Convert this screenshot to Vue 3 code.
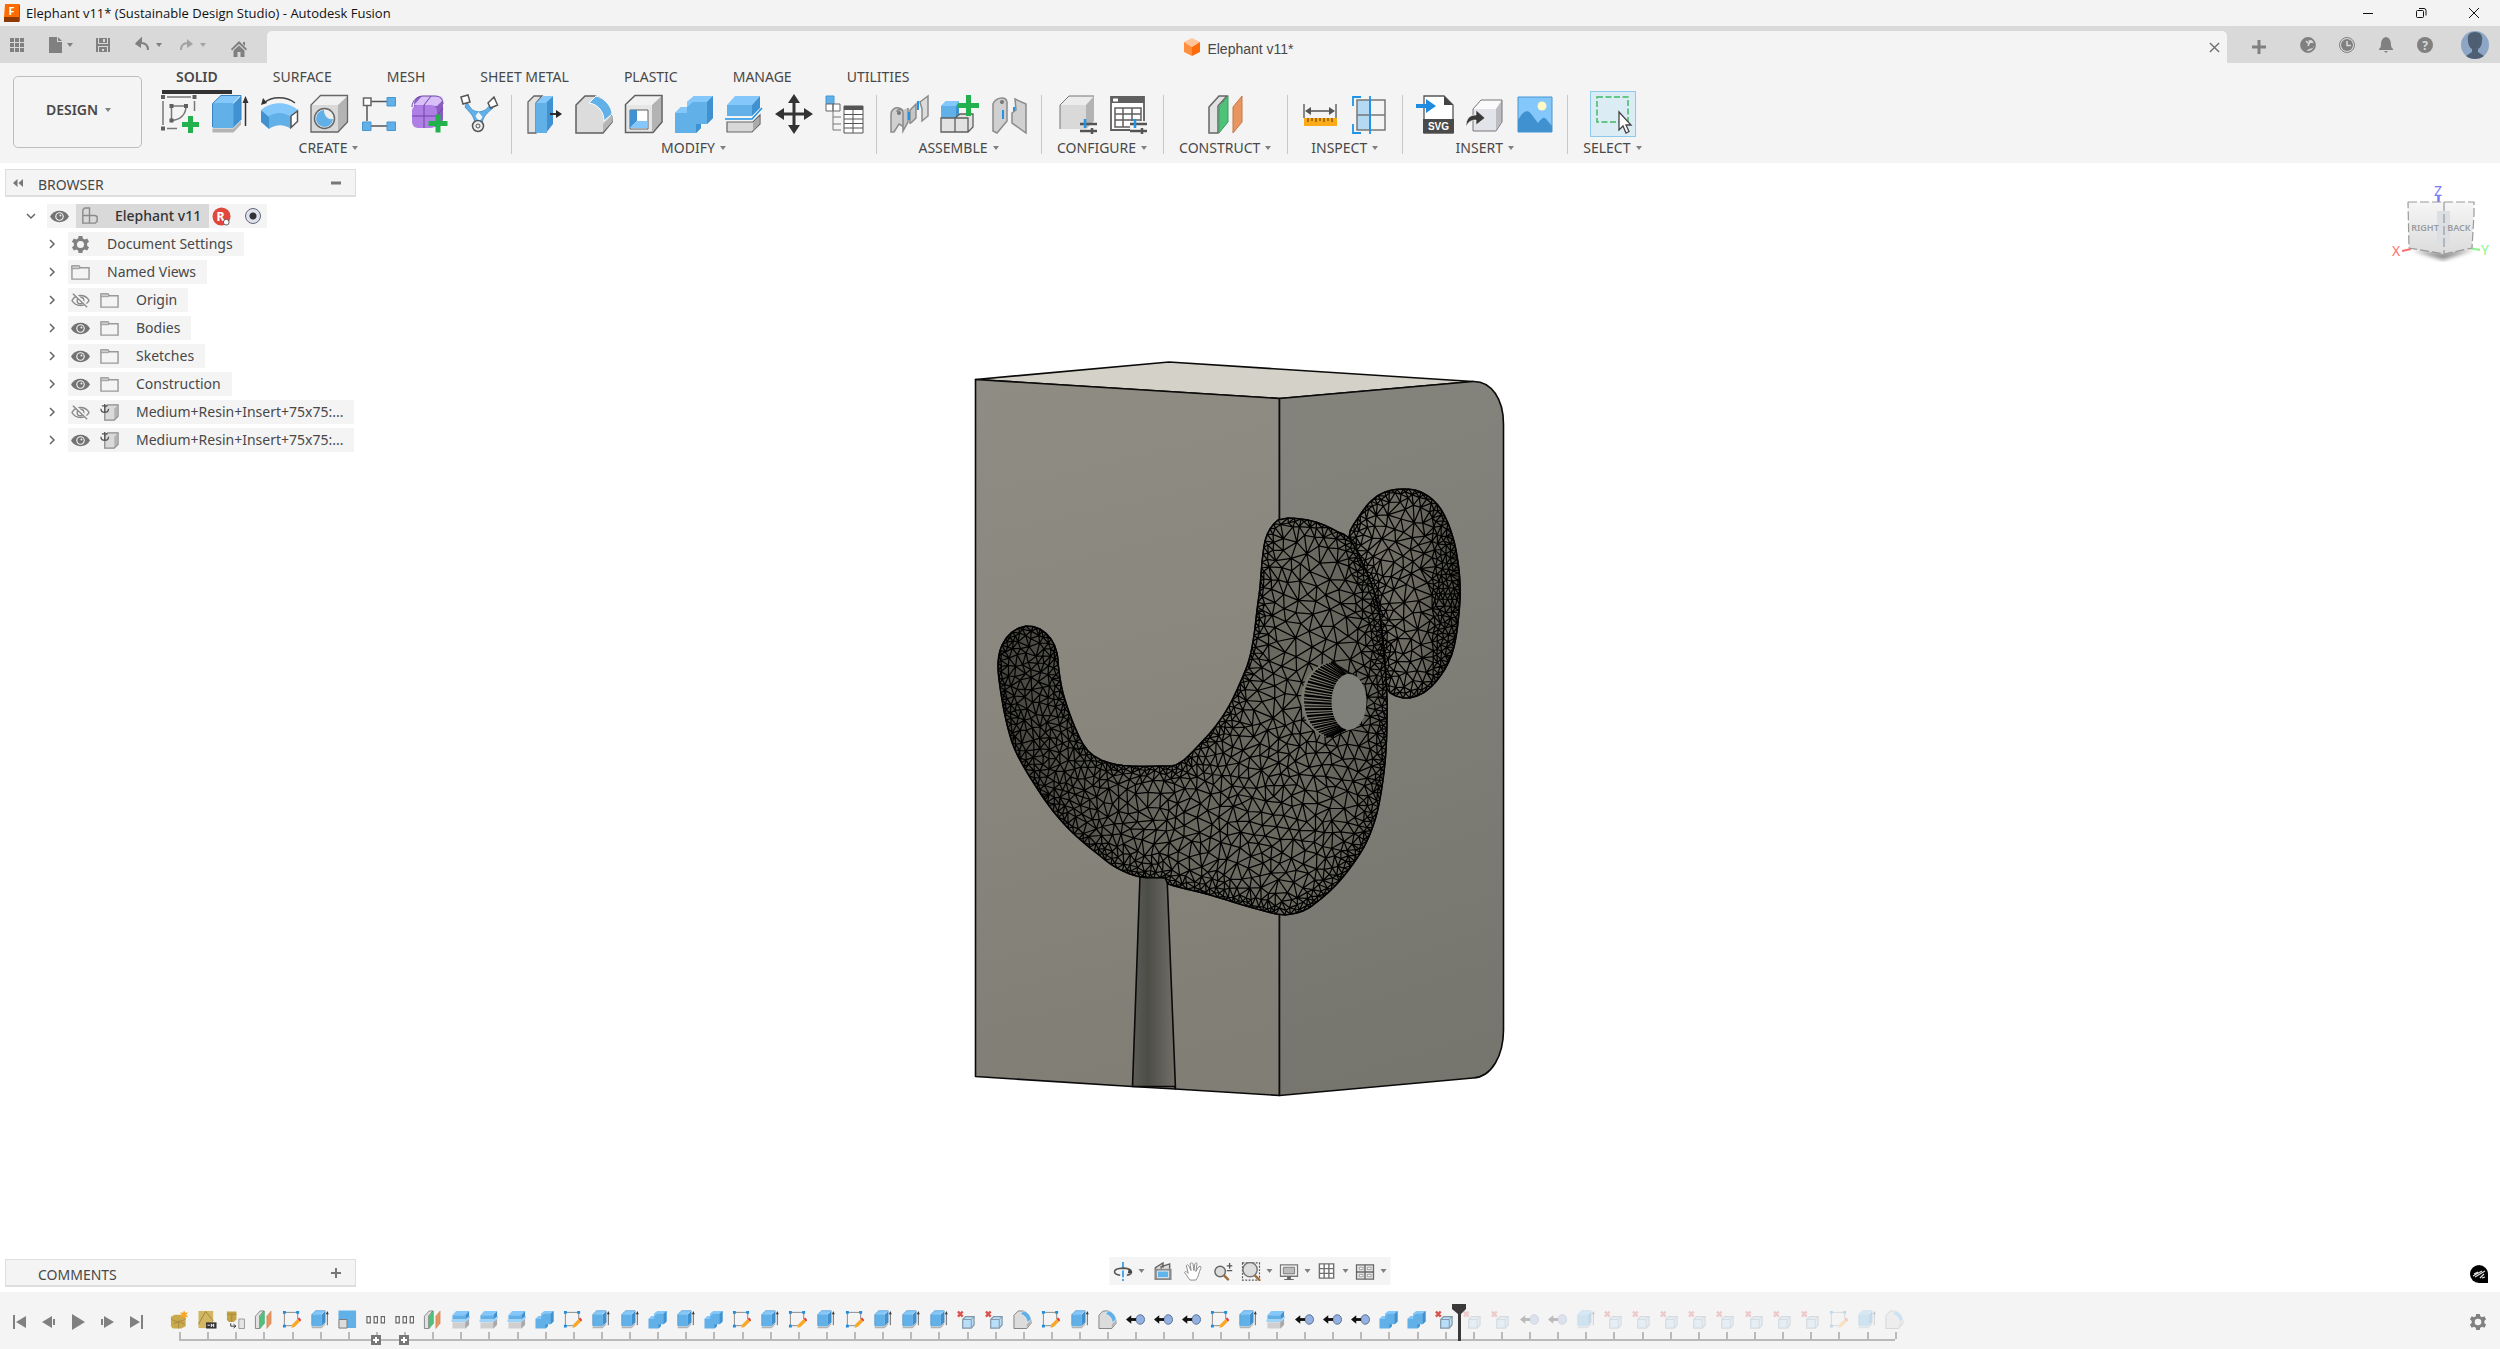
<script setup>
/* ---------- icon library (40 × 40 unless noted) ---------- */
const G = '#5f5f5f'
const caps = {
  sketch: `<path d="M8 3h24M4 7v24M35.500 7v10M8 34.500h10" stroke="#777" stroke-width="1.500" fill="none"/><path d="M2 1h4v4H2zM33.500 1h4v4h-4zM2 32.500h4v4H2z" fill="${G}"/><path d="M12.500 12H27M12.500 12v14M27 12c0 8-5 14-14.500 14.500" stroke="#777" stroke-width="1.500" fill="none"/><path d="M10.500 10h4v4h-4zM25 10h4v4h-4zM10.500 24.500h4v4h-4z" fill="${G}"/><path d="M29 22h5v6h6v5h-6v6h-5v-6h-6v-5h6z" fill="#22b14c"/>`,
  extrude: `<path d="M3.500 34.500h21l7.500-8v4l-7.500 8h-21z" fill="#b4b4b4"/><path d="M24 10l8-8v24l-8 8z" fill="#3f92cf"/><path d="M4 9l8-8h20l-8 8z" fill="#84c8fb"/><rect x="3.500" y="9" width="21" height="25" rx="1" fill="#62b0e8"/><path d="M3.500 33V9.500L12 1.500h20V26" stroke="#3a83bd" fill="none"/><path d="M36.500 32V8" stroke="#333" stroke-width="1.500"/><path d="M36.500 2l3 7h-6z" fill="#333"/>`,
  revolve: `<path d="M5 9C13 2 27 2 36 9" stroke="#444" stroke-width="1.500" fill="none"/><path d="M2 11l2-7 4 5z" fill="#333"/><path d="M2 16l8 6v13l-8-7z" fill="#3f92cf"/><path d="M2 16c10-9 27-9 37 0l-7 8c-7-5-15-5-22-1z" fill="#84c8fb"/><path d="M10 22c7-4 15-4 22 1v12c-7-5-15-5-22 0z" fill="#62b0e8"/><path d="M32 22l6.500-5v10.500L32 33.500z" fill="#fff" stroke="#555" stroke-width="1.500"/>`,
  hole: `<path d="M2 11L12 2h26L29 11z" fill="#f1f1f1"/><path d="M29 11l9.500-9v26L29 38z" fill="#b3b3b3"/><path d="M2 11h27v27H2z" fill="#d9d9d9"/><path d="M2 38V11l9.500-9.500h27V28L29 38z" fill="none" stroke="#666" stroke-width="1.300"/><circle cx="15.500" cy="24.500" r="10" fill="#eee" stroke="#666" stroke-width="1.500"/><path d="M15 16a8.500 8.500 0 1 0 9 9c-5 1-9-3-9-9z" fill="#62b0e8"/>`,
  pattern: `<path d="M12 7.500h16M8 12v15M12 32h16" stroke="#555" stroke-width="1.500"/><path d="M4.500 4h7.500v7.500H4.500z" fill="#fff" stroke="#666" stroke-width="1.500"/><path d="M28 3.500h8.500V12H28zM3.500 28H12v8.500H3.500zM28 28h8.500v8.500H28z" fill="#62b0e8" stroke="#4696d2"/>`,
  form: `<rect x="5" y="2" width="29" height="31" rx="8" fill="#8a5cc4"/><path d="M5 11l8-9h17c3 0 4 2 4 4l-6 6z" fill="#d9bff8"/><rect x="3" y="11" width="25" height="23" rx="6" fill="#b07fe6"/><path d="M15 11v23M3 22h25M15 11l7-9M28 22l6-8M3 13c0-6 5-11 11-11h12c5 0 8 3 8 8" stroke="#6d45a3" fill="none"/><path d="M26.500 20.500h5v6.500h7v5h-7v6.500h-5V32h-7v-5h7z" fill="#22b14c"/>`,
  pipe: `<path d="M8 8c4 8 6 9 12 10 6-1 8-3 11-7l3 3c-6 5-10 8-11 16h-7c-1-9-5-11-10-17z" fill="#62b0e8" stroke="#4696d2"/><path d="M19.500 18l4 5-3.500 5-3.500-6z" fill="#f4f4f4"/><path d="M2 3l7-2 2 7-7 2zM29 9l6-6 3.500 8-7 3z" fill="#fff" stroke="#555" stroke-width="1.500"/><circle cx="19" cy="32" r="5.500" fill="#eee" stroke="#555" stroke-width="1.500"/><circle cx="19" cy="32" r="2" fill="none" stroke="#555"/>`,
  presspull: `<path d="M4 8l6-6h8l-6 7v30H4z" fill="#e2e2e2" stroke="#666" stroke-width="1.300"/><path d="M12 9l7-7h10l-6 7z" fill="#84c8fb"/><path d="M22 9l7-7v28l-7 9z" fill="#3f92cf"/><path d="M12 9h11v30H12z" fill="#62b0e8"/><path d="M26 20h9" stroke="#222" stroke-width="1.800"/><path d="M32 16l6 4-6 4z" fill="#222"/>`,
  fillet: `<path d="M2 39V11l9-9h10c9 2 17 12 17 26l-9 11z" fill="#dcdcdc" stroke="#5f5f5f" stroke-width="1.500"/><path d="M29 38V30l9-9v7z" fill="#b5b5b5"/><path d="M15 9l7-7c9 2 16 11 16 18l-8 7C30 18 24 10 15 9z" fill="#62b0e8" stroke="#fff"/>`,
  shell: `<path d="M2 11L11 2h26L28 11z" fill="#f1f1f1"/><path d="M28 11l9.500-9v26L28 38z" fill="#b3b3b3"/><path d="M2 11h26v27H2z" fill="#e6e6e6"/><path d="M1.500 38.500V10.500L11 1.500h27V28l-9 10.500z" fill="none" stroke="#5f5f5f" stroke-width="1.500"/><path d="M6 16h18v19H6z" fill="#fff" stroke="#5f5f5f"/><path d="M6 16h7v11l-7 7z" fill="#3f92cf"/><path d="M13 27h10v7H6z" fill="#84c8fb"/>`,
  combine: `<path d="M1 19l6-6h6V8l7-6h19v22l-6 6h-6v4l-5 5H1z" fill="#62b0e8"/><path d="M1 19l6-6h6V8l7-6h19l-6 6H19l-6 5v6z" fill="#84c8fb"/><path d="M39 2v22l-6 6V8zM27 30v4l-5 5V30z" fill="#3f92cf"/>`,
  split: `<path d="M3 11l8-9h25l-8 9z" fill="#84c8fb"/><path d="M28 11l8-9v12l-8 8z" fill="#3f92cf"/><path d="M3 11h25v11H3z" fill="#62b0e8"/><path d="M1 25h27l10-11" stroke="#1d94e8" stroke-width="1.600" fill="none"/><path d="M3 28h26l7-7v9l-8 8H3z" fill="#d8d8d8" stroke="#666" stroke-width="1.200"/><path d="M29 29l6-6v7l-6 7z" fill="#aaa"/>`,
  tsplit: `<path d="M3 11l8-9h27l-8 9z" fill="#84c8fb"/><path d="M30 11l8-9v12l-8 8z" fill="#3f92cf"/><path d="M3 11h27v9H3z" fill="#62b0e8"/><path d="M1 20h29l10-8v5l-9 8H1z" fill="#9ed4f9"/><path d="M3 26h28l7-7v12l-7 8H3z" fill="#cfcfcf"/><path d="M30 26l8-7v12l-8 8z" fill="#a9a9a9"/>`,
  move: `<path d="M20 6v28M6 20h28" stroke="#333" stroke-width="3"/><path d="M20 0l6 9H14zM20 40l6-9H14zM1 20l9-6v12zM39 20l-9-6v12z" fill="#333"/>`,
  params: `<path d="M2 2h8v8H2z" fill="#62b0e8" stroke="#4696d2"/><path d="M2 10h7v7H2zM9 10h7v7H9z" fill="#fff" stroke="#666"/><path d="M9 17v19M9 23h8M9 30h8M9 36h8" stroke="#777" fill="none"/><path d="M20 12h19v27H20z" fill="#fff" stroke="#555"/><path d="M20 12h19v4H20z" fill="#555"/><path d="M20 20.500h19M20 25h19M20 29.500h19M20 34h19M29 16v23" stroke="#555"/>`,
  joint: `<path d="M2 20c0-4 4-7 8-6s5 3 5 7v12l-5-3-5 8H2z" fill="#d0d0d0" stroke="#8b8b8b" stroke-width="1.500"/><path d="M8 18c0-3 6-4 6 1v18l5-9V14M22 29l5-5V10l-6 6v14" fill="#c6c6c6" stroke="#8b8b8b" stroke-width="1.500"/><path d="M20 18v8M29 7v9" stroke="#1d94e8" stroke-width="2"/><path d="M31 8l8-6v20l-6 5V15z" fill="#dcdcdc" stroke="#8b8b8b" stroke-width="1.500"/><circle cx="10" cy="19" r="2" fill="#777"/>`,
  newcomp: `<path d="M2 12l5-5h13v17H2z" fill="#62b0e8"/><path d="M2 12l5-5h13l-3 5z" fill="#84c8fb"/><path d="M17 12l3-4v12l-3 4z" fill="#3f92cf"/><path d="M2 24h14v14H2zM16 24l5-4h13v13l-5 5H16zM16 24h13v14" fill="#e2e2e2" stroke="#5f5f5f" stroke-width="1.300"/><path d="M27 1h5v8h8v5h-8v8h-5v-8h-8V9h8z" fill="#22b14c"/>`,
  asbuilt: `<path d="M4 10c2-6 13-9 14-2v19L8 39l-4-2z" fill="#d0d0d0" stroke="#8b8b8b" stroke-width="1.500"/><circle cx="13" cy="8" r="2" fill="#777"/><path d="M14 16v9M25 13v9" stroke="#1d94e8" stroke-width="2"/><path d="M26 5l11 5v29L23 29V19l4-3z" fill="#d0d0d0" stroke="#8b8b8b" stroke-width="1.500"/>`,
  config: `<path d="M2 11l9-9h25l-8 9z" fill="#ececec"/><path d="M28 11l8-9v25l-8 8z" fill="#b3b3b3"/><path d="M2 11h26v24H2z" fill="#d9d9d9"/><path d="M2 35V11l9-9h25" fill="none" stroke="#777"/><path d="M22 30h17M22 37h17M34 34v6" stroke="#555" stroke-width="2.500"/><path d="M27 25v9" stroke="#1d94e8" stroke-width="2.500"/>`,
  configtable: `<path d="M3 3h33v33H3z" fill="#fff" stroke="#5f5f5f" stroke-width="1.800"/><path d="M3 3h33v6H3z" fill="#5f5f5f"/><path d="M5 4.500h5v3H5z" fill="#fff"/><path d="M7 14h26v19H7zM7 20h26M7 26h26M15 14v19M24 14v19" stroke="#5f5f5f" stroke-width="1.500" fill="none"/><path d="M22 27h18v13H22z" fill="#f4f4f4"/><path d="M22 30h17M22 37h17M34 34v6" stroke="#555" stroke-width="2.500"/><path d="M27 25v9" stroke="#1d94e8" stroke-width="2.500"/>`,
  plane: `<path d="M3 13L13 2h8l-9 10v27H3z" fill="#e2e2e2" stroke="#666" stroke-width="1.500"/><path d="M13 13L22 2v26l-9 11z" fill="#4fc27a" stroke="#3a9f60"/><path d="M27 13l9-11v26l-9 11z" fill="#e89560" stroke="#c57845"/>`,
  measure: `<path d="M4 10v14M36 10v14" stroke="#666" stroke-width="1.500"/><path d="M7 17h26" stroke="#555" stroke-width="1.500"/><path d="M5 17l6-4v8zM35 17l-6-4v8z" fill="#555"/><path d="M4 24h33v8H4z" fill="#fbab18"/><path d="M8 24v4M12 24v3M16 24v4M20 24v3M24 24v4M28 24v3M32 24v4" stroke="#7a5200" stroke-width="1.300"/>`,
  section: `<path d="M11 3H3v9M3 30v9h8" fill="none" stroke="#1d94e8" stroke-width="1.800"/><path d="M7 6h13v30H7z" fill="#b4d9f3" stroke="#777" stroke-width="1.500"/><path d="M20 6h15v30H20zM7 21h28" fill="none" stroke="#777" stroke-width="1.500"/><path d="M20 2v38" stroke="#1d94e8" stroke-width="1.800"/>`,
  svgfile: `<path d="M9 2h20l9 9v28H9z" fill="#fff" stroke="#555" stroke-width="1.300"/><path d="M29 2l9 9h-9z" fill="#444"/><path d="M8 25h31v14H8z" fill="#4a4a4a"/><text x="23.500" y="36" font-size="10" font-weight="700" font-family="Liberation Sans, sans-serif" text-anchor="middle" fill="#fff">SVG</text><path d="M1 10h10V5l10 7-10 7v-5H1z" fill="#1d8ce0"/>`,
  insertder: `<path d="M8 15l8-9h21l-6 9z" fill="#fafafa"/><path d="M31 15l6-9v21l-6 9z" fill="#bcbcc2"/><path d="M8 15h23v22H8z" fill="#e3e4ea"/><path d="M8 37V15l8-9h21v22l-6 9z" fill="none" stroke="#777"/><path d="M1 33c0-8 3-12 10-12v-5l9 8-9 7v-5c-5 0-8 2-10 7z" fill="#3a3a3a" stroke="#fff" stroke-width=".6"/>`,
  image: `<path d="M3 3h34v35H3z" fill="#84c8fb" stroke="#4696d2"/><circle cx="27" cy="12" r="4.500" fill="#fdf8c5"/><path d="M3 26c5-9 10-12 14-5l6 8c4-5 6-7 9-3l5 6v6H3z" fill="#3f92cf"/>`,
  select: `<path d="M4 3h31v25H4z" fill="none" stroke="#3dbb63" stroke-width="1.500" stroke-dasharray="6 2.500"/><path d="M26 18v18l4-4 3 7 3-1.500-3-6.500h5z" fill="#fff" stroke="#444" stroke-width="1.300"/>`,
  /* timeline-only features */
  body: `<path d="M2 14l8-4h18l5 6v18l-9 5H6l-4-5z" fill="#c9a94d"/><path d="M2 18c8 8 22 8 31 0M8 28l12-3 11 5M18 24v15" stroke="#a88a3a" stroke-width="2" fill="none"/><path d="M30 1l2 5 6-1-4 5 4 5-6-1-2 5-3-5-6 1 4-5-4-5 6 1z" fill="#ffa51f"/>`,
  meshface: `<path d="M1 2h31v36H1z" fill="#d2b664"/><path d="M1 30L16 3l16 20" stroke="#a08536" stroke-width="2" fill="none"/><path d="M17 26h22v13H17z" fill="#333"/><path d="M20 32h5M28 29v7M33 29v7M28 32h5" stroke="#fff" stroke-width="2"/>`,
  convert: `<path d="M2 3h20v17l-6 5H6l-4-4z" fill="#c4a346"/><path d="M2 9h20M12 9v15" stroke="#a88a3a" stroke-width="2"/><path d="M27 19h12v20H27z" fill="#e4e4e4" stroke="#999" stroke-width="2"/><path d="M10 28v6h10M16 30l5 4-5 4" stroke="#333" stroke-width="2" fill="none"/>`,
  tsketch: `<path d="M5 5h28v14M5 5v28h16" stroke="#888" stroke-width="2" fill="none"/><path d="M2 2h6v6H2zM30 2h6v6h-6zM2 31h6v6H2z" fill="#1d8ce0"/><path d="M20 38l2-8 11-11 5 5-11 11z" fill="#f9a825"/><path d="M33 19l3-3 5 5-3 3z" fill="#e53935"/>`,
  scale: `<path d="M1 1h37v37H19V20H1z" fill="#62b0e8"/><path d="M2 20h17v18H2z" fill="#dcdcdc" stroke="#777" stroke-width="2"/>`,
  group: `<path d="M2 14h7v13H2zM17 14h7v13h-7zM32 14h7v13h-7z" fill="#fff" stroke="#666" stroke-width="2.500"/>`,
  remove: `<path d="M2 3l10 11M12 3L2 14" stroke="#d9534f" stroke-width="5"/><path d="M12 20l6-6h18v17l-6 7H12z" fill="#b9def7" stroke="#8295a5" stroke-width="2.500"/><path d="M13 20h17v17M30 20l6-6" stroke="#8295a5" stroke-width="2" fill="none"/>`,
  tjoint: `<ellipse cx="30" cy="20" rx="9" ry="10" fill="#93b1e0" stroke="#5a6e93" stroke-width="2"/><path d="M8 20h13" stroke="#111" stroke-width="6"/><path d="M0 20l11-9v18z" fill="#111"/>`,
}

/* ---------- ribbon ---------- */
const tabs = ['SOLID', 'SURFACE', 'MESH', 'SHEET METAL', 'PLASTIC', 'MANAGE', 'UTILITIES']
const groups = [
  { name: 'CREATE', tools: ['sketch', 'extrude', 'revolve', 'hole', 'pattern', 'form', 'pipe'] },
  { name: 'MODIFY', tools: ['presspull', 'fillet', 'shell', 'combine', 'split', 'move', 'params'] },
  { name: 'ASSEMBLE', tools: ['joint', 'newcomp', 'asbuilt'] },
  { name: 'CONFIGURE', tools: ['config', 'configtable'] },
  { name: 'CONSTRUCT', tools: ['plane'] },
  { name: 'INSPECT', tools: ['measure', 'section'] },
  { name: 'INSERT', tools: ['svgfile', 'insertder', 'image'] },
  { name: 'SELECT', tools: ['select'] },
]

/* ---------- browser tree ---------- */
const small = {
  eye: `<path d="M0 10c4-8 16-8 20 0-4 8-16 8-20 0z" fill="#737373"/><circle cx="10" cy="10" r="4.500" fill="#f4f4f4"/><circle cx="10" cy="10" r="3.300" fill="#737373"/><circle cx="11" cy="9" r="1" fill="#f4f4f4"/>`,
  hidden: `<path d="M1 10c4-7 14-7 18 0-4 7-14 7-18 0z" fill="none" stroke="#8a8a8a" stroke-width="1.500"/><circle cx="10" cy="10" r="3.500" fill="none" stroke="#8a8a8a" stroke-width="1.500"/><path d="M3 2l15 15" stroke="#f4f4f4" stroke-width="3"/><path d="M2 3l15 14" stroke="#8a8a8a" stroke-width="1.500"/>`,
  folder: `<path d="M1 3h7l2 2h9v12H1z" fill="none" stroke="#999" stroke-width="1.500"/><path d="M1 3h8v3H1z" fill="#ccc" stroke="#999"/>`,
  gear: `<path d="M8 1h4l.5 2.700 2 1 2.500-1.100 2 3.400-2 1.800v2.400l2 1.800-2 3.400-2.500-1.100-2 1-.5 2.700H8l-.5-2.700-2-1L3 16.400 1 13l2-1.800V8.800L1 7l2-3.400 2.500 1.100 2-1z" fill="#808080"/><circle cx="10" cy="10" r="3.700" fill="#f4f4f4"/>`,
  part: `<path d="M5 5l3-3h11v12l-4 4H5z" fill="#dadada" stroke="#8a8a8a" stroke-width="1.300"/><path d="M15 6l3-3v11l-3 3z" fill="#b4b4b4"/><path d="M5 1v8M2 3h6M1 6c0 5 8 5 8 0" stroke="#555" stroke-width="1.400" fill="none"/>`,
  assembly: `<path d="M3 3l2-2h5v8H3zM3 9h7v8H3zM10 9h6l2 1v5l-2 2h-6z" fill="none" stroke="#8a8a8a" stroke-width="1.500"/>`,
}
const nodes = [
  { icon: 'gear', name: 'Document Settings' },
  { icon: 'folder', name: 'Named Views' },
  { eye: 'hidden', icon: 'folder', name: 'Origin' },
  { eye: 'eye', icon: 'folder', name: 'Bodies' },
  { eye: 'eye', icon: 'folder', name: 'Sketches' },
  { eye: 'eye', icon: 'folder', name: 'Construction' },
  { eye: 'hidden', icon: 'part', name: 'Medium+Resin+Insert+75x75:...' },
  { eye: 'eye', icon: 'part', name: 'Medium+Resin+Insert+75x75:...' },
]

/* ---------- timeline ---------- */
const code = {
  b: 'body', m: 'meshface', c: 'convert', p: 'plane', s: 'tsketch', e: 'extrude', a: 'scale', g: 'group',
  l: 'tsplit', u: 'combine', r: 'remove', f: 'fillet', j: 'tjoint',
}
const features = [...'bmcpseaggpllluseeueuseseseeerrfsefjjjseljjjuurrrjjerrrrrrrrsef'].map(k => code[k])
const MARKER = 46

/* ---------- sculpted mesh ---------- */
const headLine = [
  [1288, 518], [1278, 520], [1270, 529], [1265, 541], [1262, 562], [1260, 587], [1257, 610], [1254, 635], [1249, 660], [1240, 683],
  [1229, 706], [1215, 727], [1199, 745], [1184, 760], [1176, 765], [1165, 766], [1131, 766], [1110, 763], [1094, 756], [1083, 744],
  [1072, 720], [1063, 693], [1059, 671], [1057, 653], [1051, 639], [1040, 629], [1026, 626], [1012, 632], [1002, 645], [998, 663],
  [1000, 687], [1006, 720], [1015, 750], [1033, 782], [1053, 811], [1074, 834], [1099, 855], [1117, 868], [1140, 877], [1165, 878],
  [1168, 884], [1210, 895], [1246, 906], [1276, 914], [1285, 915], [1303, 911], [1317, 902], [1335, 886], [1353, 864], [1367, 841],
  [1377, 813], [1383, 780], [1386, 750], [1387, 722], [1387, 697], [1385, 665], [1383, 640], [1378, 607], [1371, 583], [1361, 560],
  [1349, 538], [1338, 532], [1324, 525], [1308, 520],
]
const earLine = [
  [1349, 537], [1358, 518], [1371, 501], [1385, 492], [1403, 489], [1421, 492], [1437, 504], [1448, 523], [1456, 550], [1460, 583],
  [1459, 613], [1454, 647], [1445, 669], [1431, 687], [1417, 696], [1403, 698], [1390, 693], [1386, 687], [1385, 665], [1383, 640],
  [1378, 607], [1371, 583], [1361, 560],
]

function smooth(pts, step) {
  const out = []
  const n = pts.length
  for (let i = 0; i < n; i++) {
    const [a, b, c, d] = [pts[(i + n - 1) % n], pts[i], pts[(i + 1) % n], pts[(i + 2) % n]]
    const k = Math.max(1, Math.round(Math.hypot(c[0] - b[0], c[1] - b[1]) / step))
    for (let j = 0; j < k; j++) {
      const t = j / k
      out.push([0, 1].map(q => 0.5 * (2 * b[q] + (c[q] - a[q]) * t + (2 * a[q] - 5 * b[q] + 4 * c[q] - d[q]) * t * t + (3 * b[q] - a[q] - 3 * c[q] + d[q]) * t * t * t)))
    }
  }
  return out
}
function inside(x, y, poly) {
  let hit = false
  for (let i = 0, j = poly.length - 1; i < poly.length; j = i++) {
    const [xi, yi] = poly[i]
    const [xj, yj] = poly[j]
    if (yi > y !== yj > y && x < ((xj - xi) * (y - yi)) / (yj - yi) + xi) hit = !hit
  }
  return hit
}
function edgeDistance(x, y, poly) {
  let best = 1e9
  for (const [a, b] of poly) {
    const d = (a - x) * (a - x) + (b - y) * (b - y)
    if (d < best) best = d
  }
  return Math.sqrt(best)
}
function triangulate(pts) {
  const all = [...pts, [-9000, -9000], [12000, -9000], [1200, 15000]]
  const n = pts.length
  const circle = (i, j, k) => {
    const [ax, ay] = all[i]
    const [bx, by] = all[j]
    const [cx, cy] = all[k]
    const d = 2 * (ax * (by - cy) + bx * (cy - ay) + cx * (ay - by)) || 1e-9
    const a = ax * ax + ay * ay
    const b = bx * bx + by * by
    const c = cx * cx + cy * cy
    const x = (a * (by - cy) + b * (cy - ay) + c * (ay - by)) / d
    const y = (a * (cx - bx) + b * (ax - cx) + c * (bx - ax)) / d
    return { v: [i, j, k], x, y, r: (ax - x) ** 2 + (ay - y) ** 2 }
  }
  let tris = [circle(n, n + 1, n + 2)]
  for (let p = 0; p < n; p++) {
    const [x, y] = all[p]
    const keep = []
    const rim = new Map()
    for (const t of tris) {
      if ((t.x - x) ** 2 + (t.y - y) ** 2 < t.r) {
        for (const [a, b] of [[0, 1], [1, 2], [2, 0]]) {
          const lo = Math.min(t.v[a], t.v[b])
          const hi = Math.max(t.v[a], t.v[b])
          const key = lo * 10000 + hi
          if (rim.has(key)) rim.delete(key)
          else rim.set(key, [lo, hi])
        }
      } else keep.push(t)
    }
    for (const [a, b] of rim.values()) keep.push(circle(a, b, p))
    tris = keep
  }
  return tris.map(t => t.v).filter(v => v.every(i => i < n))
}
/* `stretch` lengthens facets vertically; `gapAt` gives the facet size for a point and its edge distance */
function wire(line, seed, stretch, gapAt) {
  let s = seed
  const rnd = () => {
    s = (s * 1664525 + 1013904223) % 4294967296
    return s / 4294967296
  }
  const poly = smooth(line, 7)
  const xs = poly.map(p => p[0])
  const ys = poly.map(p => p[1])
  const [x0, x1, y0, y1] = [Math.min(...xs), Math.max(...xs), Math.min(...ys), Math.max(...ys)]
  const pts = poly.map(([x, y]) => [x + rnd() * 0.01, y + rnd() * 0.01])
  const cells = new Map()
  for (let i = 0; i < 45000; i++) {
    const x = x0 + rnd() * (x1 - x0)
    const y = y0 + rnd() * (y1 - y0)
    if (!inside(x, y, poly)) continue
    const d = edgeDistance(x, y, poly)
    if (d < 3) continue
    const gap = gapAt(x, y, d)
    const cx = Math.floor(x / 18)
    const cy = Math.floor(y / 18)
    let ok = true
    for (let u = cx - 1; u <= cx + 1 && ok; u++) {
      for (let v = cy - 1; v <= cy + 1 && ok; v++) {
        for (const q of cells.get(u * 1000 + v) || []) {
          if (Math.hypot((q[0] - x) * stretch, (q[1] - y) / stretch) < gap) { ok = false; break }
        }
      }
    }
    if (!ok) continue
    const key = cx * 1000 + cy
    if (!cells.has(key)) cells.set(key, [])
    cells.get(key).push([x, y])
    pts.push([x, y])
  }
  const seen = new Set()
  let path = ''
  for (const v of triangulate(pts)) {
    const mx = (pts[v[0]][0] + pts[v[1]][0] + pts[v[2]][0]) / 3
    const my = (pts[v[0]][1] + pts[v[1]][1] + pts[v[2]][1]) / 3
    if (!inside(mx, my, poly)) continue
    for (const [a, b] of [[0, 1], [1, 2], [2, 0]]) {
      const lo = Math.min(v[a], v[b])
      const hi = Math.max(v[a], v[b])
      if (seen.has(lo * 10000 + hi)) continue
      seen.add(lo * 10000 + hi)
      path += `M${pts[lo][0].toFixed(1)} ${pts[lo][1].toFixed(1)}L${pts[hi][0].toFixed(1)} ${pts[hi][1].toFixed(1)}`
    }
  }
  return { path, outline: 'M' + poly.map(p => p[0].toFixed(1) + ' ' + p[1].toFixed(1)).join('L') + 'Z' }
}
const head = wire(headLine, 7, 1.1, (x, y, d) => {
  if (x < 1100) return Math.min(6.5, 3.6 + d * 0.2)
  if (x > 1345) return Math.min(10.5, 2.8 + d * 0.24)
  if (y > 720) return Math.min(9, 3.2 + d * 0.2)
  return Math.min(11, 3.6 + d * 0.35)
})
const ear = wire(earLine, 21, 1.2, (x, y, d) => Math.min(x > 1432 ? 4.6 : 9.5, 3.2 + d * 0.35))

/* ribs of the eye socket, drawn from the outer ring to the inner disc */
let ribs = ''
for (let i = 0; i <= 44; i++) {
  const a = ((98 + i * 3.6 + (i % 3)) * Math.PI) / 180
  ribs += `M${(1336 + 32 * Math.cos(a)).toFixed(1)} ${(700 - 38 * Math.sin(a)).toFixed(1)}L${(1349 + 17 * Math.cos(a)).toFixed(1)} ${(702 - 28 * Math.sin(a)).toFixed(1)}`
}
</script>

<template>
  <div class="app">
    <header class="titlebar">
      <svg class="logo" viewBox="0 0 17 19"><path d="M2 0h14v14H1z" fill="#ff6b00" /><path d="M1 13h15v5H1z" fill="#8f3a05" /><path d="M16 0l1 1v16l-1 1z" fill="#c95200" /><text x="8.500" y="11" font-size="11" font-weight="700" text-anchor="middle" fill="#fff">F</text></svg>
      <span class="title">Elephant v11* (Sustainable Design Studio) - Autodesk Fusion</span>
      <div class="winbtns">
        <button aria-label="Minimize"><svg viewBox="0 0 12 12"><path d="M1 6.500h10" /></svg></button>
        <button aria-label="Restore"><svg viewBox="0 0 12 12"><rect x="1.500" y="3.500" width="7" height="7" rx="1" /><path d="M4 1.500h5a2 2 0 0 1 2 2v5" /></svg></button>
        <button aria-label="Close"><svg viewBox="0 0 12 12"><path d="M1 1l10 10M11 1L1 11" /></svg></button>
      </div>
    </header>

    <div class="docbar">
      <div class="quick">
        <button aria-label="Data panel"><svg viewBox="0 0 16 16"><path d="M1 1h4v4H1zM6 1h4v4H6zM11 1h4v4h-4zM1 6h4v4H1zM6 6h4v4H6zM11 6h4v4h-4zM1 11h4v4H1zM6 11h4v4H6zM11 11h4v4h-4z" /></svg></button>
        <button aria-label="File" class="file"><svg viewBox="0 0 16 16"><path d="M2 0h8v5h5v11H2zM11 0l4 4h-4z" /></svg><i class="caret"></i></button>
        <button aria-label="Save" class="save"><svg viewBox="0 0 16 16"><path d="M1 1h2v14H1zM13 1h2v14h-2zM3 7h10v2H3zM4 1h8v5H4zM4 10h8v5H4z" /><path d="M8 2h2v3H8zM7 12h2v2H7z" fill="#d9d9d9" /></svg></button>
        <button aria-label="Undo" class="undo"><svg viewBox="0 0 16 16"><path d="M2 7l5-5v4c4 0 7 2 7 7" fill="none" stroke="#808080" stroke-width="2" /><path d="M1 7l6-5v9z" /></svg><i class="caret"></i></button>
        <button aria-label="Redo" class="redo"><svg viewBox="0 0 16 16"><path d="M10 6C6 6 3 8 3 13" fill="none" stroke="#808080" stroke-width="2" /><path d="M15 7L9 2v9z" /></svg><i class="caret"></i></button>
        <button aria-label="Home" class="home"><svg viewBox="0 0 18 18"><path d="M9 1l8 8-1 1.500L9 4 2 10.500 1 9zM3.500 10.500L9 5.500l5.500 5V17h-4v-5h-3v5h-4zM13 2h2v4l-2-2z" /></svg></button>
      </div>
      <div class="doctab">
        <span class="docname">
          <svg viewBox="0 0 16 18"><path d="M8 0l8 4-8 5-8-5z" fill="#ffc49a" /><path d="M0 4l8 5v9l-8-4z" fill="#ff8f3f" /><path d="M16 4L8 9v9l8-4z" fill="#ff6b0a" /></svg>
          <span>Elephant v11*</span>
        </span>
        <button aria-label="Close document"><svg viewBox="0 0 12 12"><path d="M1 1l10 10M11 1L1 11" stroke="#6e6e6e" stroke-width="1.500" /></svg></button>
      </div>
      <div class="account">
        <button aria-label="New design" class="plus"><svg viewBox="0 0 16 16"><path d="M6.500 1h3v5.500H15v3H9.500V15h-3V9.500H1v-3h5.500z" /></svg></button>
        <button aria-label="Extensions"><svg viewBox="0 0 16 16"><circle cx="8" cy="8" r="7" fill="none" stroke="#808080" stroke-width="1.800" /><path d="M1 6l3-4h8L8 4l2 2 5 0-2 5-4 1-4 3-4-5z" /><path d="M6 4l3 3M10 5l-2 4" stroke="#d9d9d9" stroke-width="1.500" /></svg></button>
        <button aria-label="Job status"><svg viewBox="0 0 16 16"><circle cx="8" cy="8" r="7.500" fill="none" stroke="#808080" /><circle cx="8" cy="8" r="6" /><path d="M8 4v4.500h4" fill="none" stroke="#d9d9d9" stroke-width="1.500" /></svg></button>
        <button aria-label="Notifications"><svg viewBox="0 0 16 16"><path d="M8 0c4 1 5 4 5 8 0 2 1 3 2 4v1H1v-1c1-1 2-2 2-4 0-4 1-7 5-8zM6 14h4l-2 2z" /></svg></button>
        <button aria-label="Help"><svg viewBox="0 0 16 16"><circle cx="8" cy="8" r="8" /><text x="8" y="12.500" text-anchor="middle" font-size="12" font-weight="700" fill="#d9d9d9">?</text></svg></button>
        <button aria-label="Profile" class="avatar"><svg viewBox="0 0 28 28"><circle cx="14" cy="14" r="14" fill="#8ea6c6" /><path d="M14 1c6 0 8 4 7 9 0 4-2 7-4 8v3l6 4c-5 4-13 4-18 0l6-4v-3c-2-1-4-4-4-8-1-5 1-9 7-9z" fill="#4f5f73" /></svg></button>
      </div>
    </div>

    <div class="ribbon">
      <button class="workspace">DESIGN<i class="caret"></i></button>
      <div class="ribbonmain">
        <nav class="tabs"><button v-for="(t, i) in tabs" :key="t" :class="{ on: i === 0 }">{{ t }}</button></nav>
        <div class="groups">
          <section v-for="g in groups" :key="g.name" class="group">
            <div class="tools">
              <button v-for="t in g.tools" :key="t" :aria-label="t" :class="{ active: t === 'select' }"><svg viewBox="0 0 40 40" v-html="caps[t]" /></button>
            </div>
            <button class="grouplabel">{{ g.name }}<i class="caret"></i></button>
          </section>
        </div>
      </div>
    </div>

    <main class="viewport">
      <svg class="model" viewBox="950 340 600 775" role="img" aria-label="Elephant mould">
        <defs>
          <linearGradient id="faceL" x1="0" y1="0" x2="0.100" y2="1"><stop offset="0" stop-color="#8f8c84" /><stop offset="0.500" stop-color="#89867e" /><stop offset="1" stop-color="#817e76" /></linearGradient>
          <linearGradient id="faceR" x1="0" y1="0" x2="0.100" y2="1"><stop offset="0" stop-color="#84837c" /><stop offset="0.500" stop-color="#7e7d76" /><stop offset="1" stop-color="#77766e" /></linearGradient>
          <linearGradient id="slot"><stop offset="0" stop-color="#5d5d56" /><stop offset="0.350" stop-color="#4c4d47" /><stop offset="0.800" stop-color="#66655e" /><stop offset="1" stop-color="#716f68" /></linearGradient>
          <linearGradient id="skin"><stop offset="0" stop-color="#45443e" /><stop offset="0.150" stop-color="#504f48" /><stop offset="0.400" stop-color="#68675e" /><stop offset="0.800" stop-color="#6b6a61" /><stop offset="1" stop-color="#5e5d55" /></linearGradient>
          <linearGradient id="earskin"><stop offset="0" stop-color="#75736a" /><stop offset="0.600" stop-color="#6b6960" /><stop offset="1" stop-color="#4b4a43" /></linearGradient>
        </defs>
        <g stroke="#0a0a0a" stroke-width="1.600" stroke-linejoin="round">
          <path d="M975.500 379.500L1169 362 1473 381.500 1279.500 398.500z" fill="#d3d1c8" />
          <path d="M975.500 379.500L1279.500 398.500V1095.500L1175 1089 1132 1086.500 975.500 1076.500z" fill="url(#faceL)" />
          <path d="M1279.500 398.500L1473 381.500C1492 381 1503.500 400 1503.500 424V1030C1503.500 1055 1492 1077 1473 1078L1279.500 1095.500z" fill="url(#faceR)" />
          <path d="M1140 876L1132.500 1086.500h42L1175.500 1089 1167 876z" fill="url(#slot)" />
        </g>
        <path :d="ear.outline" fill="url(#earskin)" stroke="#0a0a0a" stroke-width="1.500" />
        <path :d="ear.path" class="wire" />
        <path :d="head.outline" fill="url(#skin)" stroke="#0a0a0a" stroke-width="1.500" />
        <path :d="head.path" class="wire" />
        <path d="M1331 662A32 38 0 0 0 1326 737L1349 730V674z" fill="#7b786e" />
        <path d="M1331 662l18 11 8 4M1326 737l20-8" fill="none" stroke="#0a0a0a" stroke-width="2.500" />
        <path :d="ribs" class="wire" />
        <ellipse cx="1349" cy="702" rx="17.500" ry="28" fill="#80807a" />
      </svg>

      <aside class="browser">
        <div class="panelhead">
          <button aria-label="Collapse"><svg viewBox="0 0 10 8"><path d="M4.500 0v8L0 4zM10 0v8L5.500 4z" fill="#777" /></svg></button>
          <span>BROWSER</span>
          <button aria-label="Minimise panel" class="end"><svg viewBox="0 0 10 8"><path d="M0 2.500h10v3H0z" fill="#777" /></svg></button>
        </div>
        <ul class="tree">
          <li class="root">
            <button class="chev" aria-label="Collapse node"><svg viewBox="0 0 10 10"><path d="M1 3l4 4 4-4" /></svg></button>
            <span class="cell"><svg viewBox="0 0 20 20" v-html="small.eye" /></span>
            <span class="rootname"><svg viewBox="0 0 20 20" v-html="small.assembly" />Elephant v11</span>
            <span class="cell"><svg viewBox="0 0 20 20"><circle cx="10" cy="10" r="9.500" fill="#e0483e" /><text x="9" y="15" font-size="13" font-weight="700" text-anchor="middle" fill="#fff">R</text><circle cx="15" cy="16" r="3" fill="#fff" stroke="#555" /></svg></span>
            <label class="cell"><input type="radio" name="active" checked aria-label="Activate component" /></label>
          </li>
          <li v-for="(n, i) in nodes" :key="i">
            <button class="chev" aria-label="Expand node"><svg viewBox="0 0 10 10"><path d="M3 1l4 4-4 4" /></svg></button>
            <span v-if="n.eye" class="cell"><svg viewBox="0 0 20 20" v-html="small[n.eye]" /></span>
            <span class="cell"><svg viewBox="0 0 20 20" v-html="small[n.icon]" /></span>
            <span class="name">{{ n.name }}</span>
          </li>
        </ul>
      </aside>

      <svg class="viewcube" viewBox="0 -12 100 102">
        <defs>
          <linearGradient id="cube" x1="0" y1="0" x2="0" y2="1"><stop offset="0" stop-color="#f6f6f6" /><stop offset="1" stop-color="#dcdcdc" /></linearGradient>
          <filter id="soft"><feGaussianBlur stdDeviation="2" /></filter>
        </defs>
        <path d="M20 68l31 10 32-11-32 4z" fill="#888" filter="url(#soft)" />
        <path d="M46.500 14v7" stroke="#7a7aff" stroke-width="2.500" />
        <path d="M10 69l9-2" stroke="#ff7070" stroke-width="2" /><path d="M77 66l11 2" stroke="#8cf58c" stroke-width="2" />
        <path d="M16 20h36v52l-35-6z" fill="url(#cube)" /><path d="M52 20h30l-2 46-28 6z" fill="url(#cube)" />
        <path d="M45 29h13v33H45z" fill="#dcdfe3" />
        <path d="M16 20h66v12l-2 34-28 6-35-6-1-46M52 20v52" fill="none" stroke="#999" stroke-dasharray="9 3" stroke-width="1.200" />
        <text x="33" y="49" class="face">RIGHT</text><text x="67" y="49" class="face">BACK</text>
        <text x="46" y="14" class="axis" fill="#7a7aff">Z</text><text x="4" y="74" class="axis" fill="#ff7070">X</text><text x="93" y="73" class="axis" fill="#8cf58c">Y</text>
      </svg>

      <div class="comments panelhead">
        <span>COMMENTS</span>
        <button aria-label="Add comment" class="end"><svg viewBox="0 0 10 10"><path d="M4 0h2v4h4v2H6v4H4V6H0V4h4z" fill="#777" /></svg></button>
      </div>

      <div class="navbar">
        <button aria-label="Orbit"><svg viewBox="0 0 20 20"><path d="M10 0v20" stroke="#3fa3ee" stroke-width="2" stroke-dasharray="7 2" /><path d="M7 14c-8-1-9-7 3-7.500 10 0 12 6 4 7.500" fill="none" stroke="#555" stroke-width="1.700" /><path d="M16 7l4 4-5 1z" fill="#444" /></svg><i class="caret"></i></button>
        <button aria-label="Look at" class="solo"><svg viewBox="0 0 20 20"><path d="M2 8V6l8-5v5M8 7V5l9-3v5" fill="#ddd" stroke="#666" stroke-width="1.500" /><path d="M1 7h18v12H1z" fill="#8a8a8a" /><path d="M4 9.500h12v7H4z" fill="#5fb4ee" stroke="#eee" /></svg></button>
        <button aria-label="Pan" class="solo"><svg viewBox="0 0 20 20"><path d="M7 19c-3-3-4-6-6-8 1-2 3 0 4 1L3 4c1-2 2-1 3 1l2 4-1-7c1-2 2-1 3 0l1 7 1-7c1-2 3-1 2 1l-1 7 3-5c2-1 3 0 2 2-2 4-2 9-5 12z" fill="#fff" stroke="#888" /></svg></button>
        <button aria-label="Zoom" class="solo"><svg viewBox="0 0 20 20"><circle cx="7" cy="10" r="5.500" fill="#ddd" stroke="#666" stroke-width="1.500" /><path d="M11 14l5 5" stroke="#9b6d3c" stroke-width="2.500" /><path d="M14 4h6M17 1v6M14 9h6" stroke="#555" stroke-width="1.300" /></svg></button>
        <button aria-label="Fit"><svg viewBox="0 0 20 20"><path d="M1 1h18v18H1z" fill="none" stroke="#555" stroke-dasharray="2 1.500" stroke-width="1.300" /><circle cx="9" cy="8" r="7.500" fill="#ddd" stroke="#777" stroke-width="1.500" /><path d="M14 14l6 6" stroke="#9b6d3c" stroke-width="2.500" /></svg><i class="caret"></i></button>
        <button aria-label="Display settings"><svg viewBox="0 0 20 20"><path d="M1 3h18v12H1z" fill="#fff" stroke="#777" stroke-width="1.500" /><path d="M4 5.500h12v7H4z" fill="#bbb" stroke="#777" /><path d="M8 15h4v3h3v1H5v-1h3z" fill="#666" /></svg><i class="caret"></i></button>
        <button aria-label="Grid and snaps"><svg viewBox="0 0 20 20"><path d="M2 2h15v15H2zM2 7h15M2 12h15M7 2v15M12 2v15" fill="#fff" stroke="#707070" stroke-width="1.500" /></svg><i class="caret"></i></button>
        <button aria-label="Viewports"><svg viewBox="0 0 20 20"><path d="M1 3h18v15H1zM1 10.500h18M10 3v15" fill="#e8e8e8" stroke="#666" stroke-width="1.500" /><path d="M4 5.500h4v2.500H4zM12.500 5.500h4v2.500h-4zM4 13h4v2.500H4zM12.500 13h4v2.500h-4z" fill="#fff" stroke="#999" /></svg><i class="caret"></i></button>
      </div>

      <button class="assistant" aria-label="Assistant"><svg viewBox="0 0 18 18"><path d="M9 0a9 9 0 0 1 9 9v9H9A9 9 0 0 1 9 0z" fill="#000" /><path d="M3 11l9-5M5 12l10-6M4 9l4-2M10 13l4-4M12 13l3-1" stroke="#ddd" stroke-width="1.200" /></svg></button>
    </main>

    <footer class="timeline">
      <div class="play">
        <button aria-label="To start"><svg viewBox="0 0 16 16"><path d="M1 1h2v14H1zM14 2v12L4 8z" /></svg></button>
        <button aria-label="Step back"><svg viewBox="0 0 16 16"><path d="M11 2v12L1 8zM12 5h2v6h-2z" /></svg></button>
        <button aria-label="Play"><svg viewBox="0 0 16 16"><path d="M2 0l13 8-13 8z" /></svg></button>
        <button aria-label="Step forward"><svg viewBox="0 0 16 16"><path d="M5 2v12l10-6zM2 5h2v6H2z" /></svg></button>
        <button aria-label="To end"><svg viewBox="0 0 16 16"><path d="M13 1h2v14h-2zM2 2v12l10-6z" /></svg></button>
      </div>
      <ol class="track">
        <li v-for="(f, i) in features" :key="i" :class="{ faded: i >= MARKER }">
          <svg viewBox="0 0 40 40" v-html="caps[f]" />
          <svg v-if="f === 'group'" class="expand" viewBox="0 0 10 10"><path d="M0 0h10v10H0z" fill="#777" /><path d="M5 2v6M2 5h6" stroke="#fff" stroke-width="2" /></svg>
          <svg v-if="i === MARKER - 1" class="marker" viewBox="0 0 14 37"><path d="M0 0h14v5l-5 5v27H6V10L0 5z" fill="#3a3a3a" /></svg>
        </li>
      </ol>
      <button class="settings" aria-label="Timeline settings"><svg viewBox="0 0 20 20" v-html="small.gear" /></button>
    </footer>
  </div>
</template>

<style>
body { margin: 0; background: #fff; }
</style>

<style scoped>
.app { min-height: 100vh; display: flex; flex-direction: column; font-family: "Noto Sans", sans-serif; font-size: 14px; line-height: 20px; color: #484848; }
svg { display: block; flex: none; }
button { border: 0; padding: 0; background: none; font: inherit; color: inherit; display: flex; align-items: center; justify-content: center; }
ul, ol { list-style: none; margin: 0; padding: 0; }
.caret { flex: none; border: 3px solid transparent; border-top: 4px solid #808080; border-bottom: 0; }

.titlebar { height: 26px; display: flex; align-items: center; background: #f3f3f3; color: #111; }
.logo { width: 17px; height: 19px; margin-left: 3px; }
.title { font-family: "Open Sans", sans-serif; font-size: 13px; margin-left: 6px; }
.winbtns { margin-left: auto; display: flex; }
.winbtns button { width: 53px; height: 24px; }
.winbtns svg { width: 12px; height: 12px; fill: none; stroke: #111; }

.docbar { height: 37px; display: flex; background: #d9d9d9; }
.docbar button svg { width: 16px; height: 16px; fill: #808080; }
.quick { width: 267px; display: flex; align-items: center; box-sizing: border-box; padding-left: 9px; }
.quick button { gap: 4px; }
.quick .file { margin-left: 22px; }
.quick .save { margin-left: 22px; }
.quick .undo { margin-left: 23px; gap: 6px; }
.quick .redo { margin-left: 16px; gap: 6px; opacity: .6; }
.quick .home { margin-left: 24px; }
.docbar .home svg { width: 18px; height: 18px; margin-top: 8px; }
.doctab { flex: 1; margin-top: 5px; background: #f4f4f4; border-radius: 5px 5px 0 0; display: flex; align-items: center; padding-right: 7px; }
.docname { flex: 1; display: flex; align-items: center; justify-content: center; gap: 7px; font-family: "Liberation Sans", sans-serif; padding-left: 2px; }
.docname span { padding-top: 3px; }
.docname svg { width: 16px; height: 18px; }
.docbar .doctab button svg { width: 11px; height: 11px; }
.account { width: 273px; box-sizing: border-box; display: flex; align-items: center; padding: 0 13px 0 24px; gap: 23px; }
.account .plus { margin: 4px 10px 0 0; }
.account .avatar { margin-left: 5px; }
.docbar .avatar svg { width: 28px; height: 28px; }

.ribbon { display: flex; height: 100px; background: #f4f4f4; }
.workspace { box-sizing: border-box; width: 129px; height: 72px; margin: 13px 0 0 13px; border: 1px solid #bdbdbd; border-radius: 5px; font-weight: 600; gap: 7px; padding: 0 0 4px 2px; }
.ribbonmain { display: flex; flex-direction: column; margin-left: 5px; }
.tabs { display: flex; gap: 27px; padding-left: 15px; }
.tabs button { padding: 4px 14px 3px; height: 20px; box-sizing: content-box; border-bottom: 4px solid transparent; }
.tabs .on { font-weight: 600; border-color: #333; }
.groups { display: flex; margin-top: -3px; }
.group { position: relative; display: flex; flex-direction: column; align-items: center; padding: 0 9px; border-right: 1px solid #f4f4f4; }
.group::after { content: ""; position: absolute; right: -1px; top: 4px; width: 1px; height: 59px; background: #c8c8c8; }
.group:last-child::after { display: none; }
.tools { display: flex; gap: 4px; }
.tools button { width: 46px; height: 46px; box-sizing: border-box; border: 1px solid transparent; }
.tools button.active { background: #dcecf4; border-color: #8cc9ea; }
.tools svg { width: 40px; height: 40px; }
.grouplabel { padding: 1px 7px 0 6px; height: 20px; gap: 5px; }

.viewport { position: relative; flex: 1; min-height: 1100px; display: flex; align-items: center; justify-content: center; background: #fff; }
.model { width: 24vw; min-width: 320px; aspect-ratio: 600 / 775; }
.wire { fill: none; stroke: #000; stroke-width: 1.25; }

.panelhead { box-sizing: border-box; width: 351px; height: 28px; display: flex; align-items: center; background: #f4f4f4; border: 1px solid #dedede; border-bottom-width: 2px; padding: 0 14px 0 7px; }
.panelhead svg { width: 10px; height: 8px; }
.panelhead span { margin-left: 15px; padding-top: 4px; }
.panelhead .end { margin-left: auto; }
.browser { position: absolute; left: 5px; top: 6px; }
.tree { margin-top: 7px; display: flex; flex-direction: column; gap: 4px; }
.tree li { display: flex; height: 24px; margin-left: 36px; }
.tree .root { margin-left: 15px; }
.chev { width: 27px; height: 24px; padding-right: 5px; }
.chev svg { width: 10px; height: 10px; fill: none; stroke: #666; stroke-width: 1.5; }
.cell { width: 29px; display: flex; align-items: center; justify-content: center; background: #f4f4f4; }
.tree .cell svg { width: 19px; height: 19px; margin-right: 4px; }
.cell input { margin: 0; width: 16px; height: 16px; appearance: none; border: 1px solid #667; border-radius: 50%; background: radial-gradient(circle, #333 0 3px, #dde3ea 4px); }
.rootname { display: flex; align-items: center; width: 133px; box-sizing: border-box; background: #d9d9d9; font-weight: 500; gap: 16px; padding-left: 4px; color: #333; }
.rootname svg { width: 19px; height: 19px; }
.name { display: flex; align-items: center; background: #f4f4f4; padding: 0 11px 0 10px; white-space: nowrap; }

.viewcube { position: absolute; right: 8px; top: 7px; width: 100px; height: 102px; }
.face { font: 600 9px "Noto Sans", sans-serif; fill: #9a9ca0; text-anchor: middle; }
.axis { font: 14px "Noto Sans", sans-serif; text-anchor: middle; }
.comments { position: absolute; left: 5px; bottom: 5px; }
.comments.panelhead span { margin-left: 25px; }
.comments.panelhead svg { height: 10px; }
.navbar { position: absolute; left: 50%; bottom: 7px; transform: translateX(-50%); display: flex; align-items: center; gap: 7px; height: 28px; padding: 0 4px; background: #f4f4f4; }
.navbar button { gap: 6px; }
.navbar .solo { padding: 0 2px; }
.navbar svg { width: 19px; height: 19px; }
.assistant { position: absolute; right: 12px; bottom: 9px; }
.assistant svg { width: 18px; height: 18px; }

.timeline { display: flex; height: 57px; background: #f4f4f4; }
.play { display: flex; align-items: center; gap: 13px; padding: 0 21px 0 12px; height: 60px; }
.play svg { width: 16px; height: 16px; fill: #808080; }
.track { flex: 1; max-width: 1744px; display: flex; padding-top: 18px; }
.track li { position: relative; flex: 1; height: 31px; display: flex; justify-content: center; align-items: flex-start; box-sizing: border-box; border-bottom: 2px solid #bababa; }
.track li > svg { width: 19px; height: 19px; }
.track li::after { content: ""; position: absolute; left: 50%; bottom: 0; width: 2px; height: 7px; background: #bababa; }
.track li:first-child, .track li:last-child { border-color: transparent; }
.track li:first-child::before, .track li:last-child::before { content: ""; position: absolute; bottom: -2px; width: 50%; height: 2px; background: #bababa; }
.track li:first-child::before { right: 0; }
.track li:last-child::before { left: 0; }
.track .faded > svg { opacity: .25; }
.track li > .expand { position: absolute; left: 9px; bottom: -6px; width: 10px; height: 10px; z-index: 1; }
.track li > .marker { position: absolute; right: -7px; top: -6px; width: 14px; height: 37px; z-index: 1; }
.settings { margin-left: auto; padding-right: 13px; height: 60px; }
.settings svg { width: 18px; height: 18px; }
</style>
